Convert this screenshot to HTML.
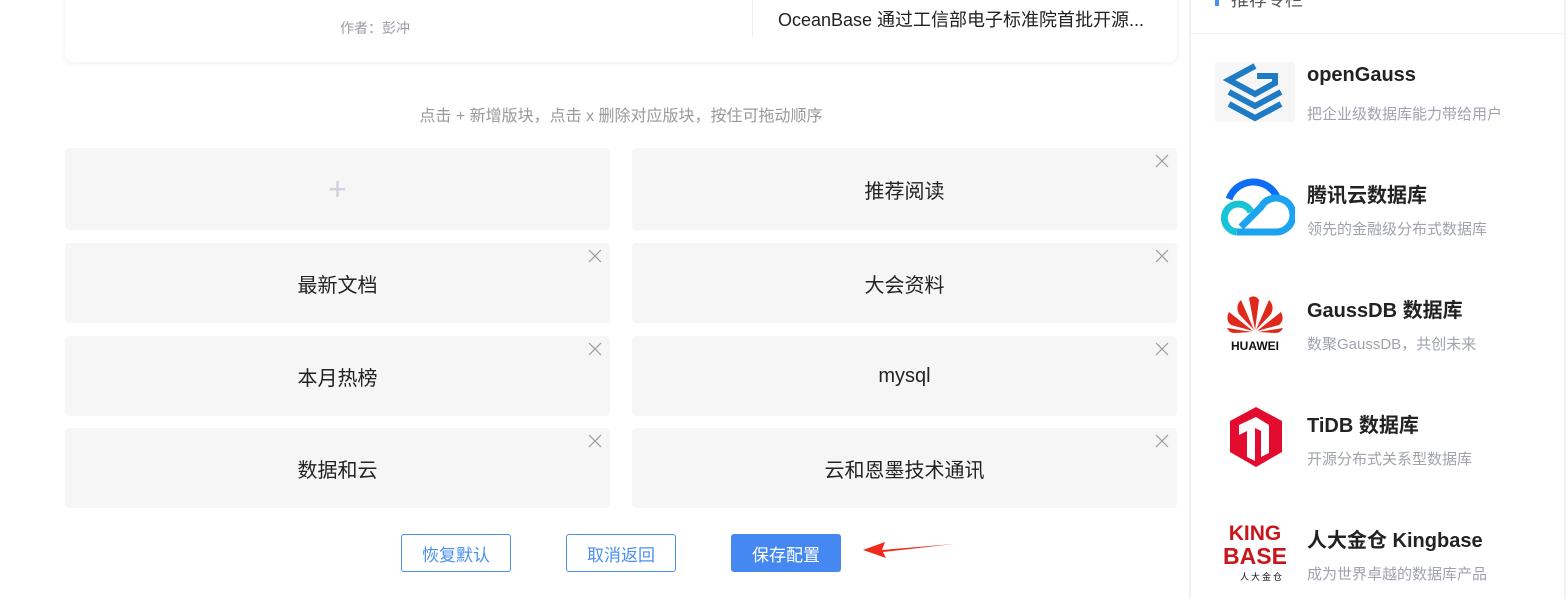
<!DOCTYPE html>
<html><head><meta charset="utf-8"><style>
*{margin:0;padding:0;box-sizing:border-box}
body{width:1568px;height:599px;overflow:hidden;background:#fff;font-family:"Liberation Sans","Noto Sans CJK SC",sans-serif;position:relative}
.card{position:absolute;left:65px;top:-20px;width:1112px;height:82px;background:#fff;border-radius:8px;box-shadow:0 1px 6px rgba(0,0,0,.08)}
.abs{position:absolute}
.box{position:absolute;width:545px;height:80px;background:#f6f6f6;border-radius:4px;display:flex;align-items:center;justify-content:center;font-size:20px;color:#222}
.x{position:absolute;right:8px;top:6px;width:14px;height:14px}
.btn{position:absolute;top:534px;width:110px;height:38px;border:1px solid #4a90f0;border-radius:3px;color:#4a90f0;font-size:17px;display:flex;align-items:center;justify-content:center}
.side{position:absolute;left:1189px;top:0;width:377px;height:599px;border-left:2px solid #f0f1f4;border-right:2px solid #f0f1f4}
.it{position:absolute;left:24px;width:340px;height:60px}
.logo{position:absolute;left:0;top:0;width:80px;height:60px}
.t{position:absolute;left:92px;top:2px;font-size:20px;font-weight:bold;color:#222;white-space:nowrap}
.s{position:absolute;left:92px;top:41px;font-size:15px;color:#a0a3ad;white-space:nowrap}
</style></head><body>
<div class="card">
<div class="abs" style="left:275px;top:38px;font-size:14px;color:#9a9ca6">作者：彭冲</div>
<div class="abs" style="left:687px;top:0;width:1px;height:57px;background:#eee"></div>
<div class="abs" style="left:713px;top:26px;font-size:18px;color:#222">OceanBase 通过工信部电子标准院首批开源...</div>
</div>
<div class="abs" style="left:0;width:1242px;top:102px;text-align:center;font-size:16px;color:#999">点击 + 新增版块，点击 x 删除对应版块，按住可拖动顺序</div>

<div class="box" style="left:65px;top:148px;height:82px;font-size:32px;color:#cfd1dc;font-weight:300">+</div>
<div class="box" style="left:632px;top:148px;height:82px">推荐阅读<svg class="x" viewBox="0 0 14 14"><path d="M1 1L13 13M13 1L1 13" stroke="#999" stroke-width="1.2"/></svg></div>
<div class="box" style="left:65px;top:243px">最新文档<svg class="x" viewBox="0 0 14 14"><path d="M1 1L13 13M13 1L1 13" stroke="#999" stroke-width="1.2"/></svg></div>
<div class="box" style="left:632px;top:243px">大会资料<svg class="x" viewBox="0 0 14 14"><path d="M1 1L13 13M13 1L1 13" stroke="#999" stroke-width="1.2"/></svg></div>
<div class="box" style="left:65px;top:336px">本月热榜<svg class="x" viewBox="0 0 14 14"><path d="M1 1L13 13M13 1L1 13" stroke="#999" stroke-width="1.2"/></svg></div>
<div class="box" style="left:632px;top:336px">mysql<svg class="x" viewBox="0 0 14 14"><path d="M1 1L13 13M13 1L1 13" stroke="#999" stroke-width="1.2"/></svg></div>
<div class="box" style="left:65px;top:428px">数据和云<svg class="x" viewBox="0 0 14 14"><path d="M1 1L13 13M13 1L1 13" stroke="#999" stroke-width="1.2"/></svg></div>
<div class="box" style="left:632px;top:428px">云和恩墨技术通讯<svg class="x" viewBox="0 0 14 14"><path d="M1 1L13 13M13 1L1 13" stroke="#999" stroke-width="1.2"/></svg></div>

<div class="btn" style="left:401px">恢复默认</div>
<div class="btn" style="left:566px">取消返回</div>
<div class="btn" style="left:731px;background:#4688f1;border-color:#4688f1;color:#fff">保存配置</div>
<svg class="abs" style="left:860px;top:538px" width="100" height="22" viewBox="0 0 100 22"><path d="M94 6L22 12L25 4L3 12L26 20L23 14Z" fill="#f02a1d"/></svg>

<div class="side">
<div class="abs" style="left:24px;top:-8px;width:4px;height:14px;background:#4a90f0"></div>
<div class="abs" style="left:40px;top:-14px;font-size:18px;color:#555">推荐专栏</div>
<div class="abs" style="left:0;top:33px;width:373px;height:1px;background:#eef0f3"></div>

<div class="it" style="top:62px"><svg class="logo" viewBox="0 0 80 60"><rect width="80" height="60" rx="2" fill="#f6f6f6"/><g fill="none" stroke="#1f7cc4" stroke-width="6"><path d="M40 4L14 18L40 32L60 21V14H42"/><path d="M14 30L40 44L66 30"/><path d="M14 42L40 56L66 42"/></g></svg><div class="t">openGauss</div><div class="s">把企业级数据库能力带给用户</div></div>

<div class="it" style="top:177px"><svg class="logo" viewBox="0 0 80 60"><path d="M14 22A26 26 0 0 1 62 20" fill="none" stroke="#0d6ef5" stroke-width="7"/><path d="M22 55H60A17 17 0 1 0 46 30L26 50" fill="none" stroke="#1ba3f0" stroke-width="7"/><path d="M36 35A14 14 0 1 0 22 55" fill="none" stroke="#19c3d6" stroke-width="7"/></svg><div class="t">腾讯云数据库</div><div class="s">领先的金融级分布式数据库</div></div>

<div class="it" style="top:292px"><svg class="logo" viewBox="0 0 80 60"><g fill="#e0281b"><path d="M40 38L34 6Q40 2 44 8Z"/><path d="M39 38L26 8Q20 14 24 22Z"/><path d="M41 38L54 8Q60 14 56 22Z"/><path d="M38 39L14 20Q10 28 16 33Z"/><path d="M42 39L66 20Q70 28 64 33Z"/><path d="M37 40L12 36Q14 41 20 41Z"/><path d="M43 40L68 36Q66 41 60 41Z"/></g><text x="40" y="58" font-size="12" font-weight="bold" text-anchor="middle" font-family="Liberation Sans" fill="#111">HUAWEI</text></svg><div class="t">GaussDB 数据库</div><div class="s">数聚GaussDB，共创未来</div></div>

<div class="it" style="top:407px"><svg class="logo" viewBox="0 0 80 60"><path d="M41 0L67 14V45L41 60L15 45V14Z" fill="#e30b2e"/><path d="M24 18L41 10L54 18V46L46 50V24L40 21V54L32 50V24L24 28Z" fill="#fff"/></svg><div class="t">TiDB 数据库</div><div class="s">开源分布式关系型数据库</div></div>

<div class="it" style="top:522px"><svg class="logo" viewBox="0 0 80 60"><text x="40" y="18" font-size="21" font-weight="bold" text-anchor="middle" font-family="Liberation Sans" fill="#c8161d">KING</text><text x="40" y="42" font-size="23" font-weight="bold" text-anchor="middle" font-family="Liberation Sans" fill="#c8161d">BASE</text><text x="25" y="58" font-size="9" font-family="Noto Sans CJK SC" fill="#111">人 大 金 仓</text></svg><div class="t">人大金仓 Kingbase</div><div class="s">成为世界卓越的数据库产品</div></div>
</div>
</body></html>
